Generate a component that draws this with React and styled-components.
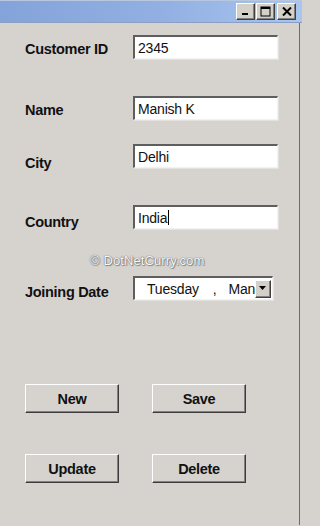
import React from "react";
import styled, { createGlobalStyle } from "styled-components";

const GlobalStyle = createGlobalStyle`
  html, body {
    margin: 0;
    padding: 0;
    background: #d6d3ce;
  }
  body {
    font-family: "Liberation Sans", Arial, sans-serif;
  }
`;

const Window = styled.div`
  position: relative;
  width: 302px;
  height: 526px;
  overflow: hidden;
  background: #d6d3ce;
`;

// Title bar with the three caption buttons
const TitleBar = styled.div`
  height: 23px;
  border-top: 1px solid #b8c6de;
  border-bottom: 1px solid #8c9fc2;
  background: linear-gradient(to right, #84a3da 0%, #92b0e2 55%, #a9c6ef 100%);
  display: flex;
  justify-content: flex-end;
  align-items: center;
  padding-right: 6px;
  box-sizing: border-box;
`;

const CaptionButton = styled.div`
  width: 19px;
  height: 17px;
  margin-left: ${(p) => p.$space || 1}px;
  box-sizing: border-box;
  background: #d4d0c8;
  border-top: 1px solid #ffffff;
  border-left: 1px solid #ffffff;
  border-right: 1px solid #404040;
  border-bottom: 1px solid #404040;
  box-shadow: inset -1px -1px 0 #808080;
  display: flex;
  align-items: center;
  justify-content: center;
`;

const Body = styled.div`
  position: relative;
  height: 502px;
  width: 300px;
  box-sizing: border-box;
  border-right: 1px solid #6c6c6c;
  padding: 12px 0 0 25px;
`;

const Row = styled.div`
  display: flex;
  align-items: flex-start;
  height: 24px;
  margin-top: ${(p) => p.$gap}px;
`;

const Label = styled.div`
  width: 108px;
  padding-top: ${(p) => p.$offset}px;
  font-size: 14.5px;
  font-weight: bold;
  letter-spacing: -0.3px;
  line-height: 17px;
  color: #111;
`;

const TextBox = styled.div`
  width: 145px;
  height: 24px;
  box-sizing: border-box;
  background: #ffffff;
  border-top: 2px solid #5e5e5e;
  border-left: 2px solid #5e5e5e;
  border-right: 1px solid #f2f2f2;
  border-bottom: 1px solid #f2f2f2;
  box-shadow: 1px 1px 0 #e4e2de;
  padding: 0 3px;
  display: flex;
  align-items: center;
  font-size: 14px;
  letter-spacing: -0.2px;
  color: #111;
`;

const Caret = styled.span`
  display: inline-block;
  width: 1px;
  height: 15px;
  margin-left: 1px;
  background: #000;
`;

const DateBox = styled(TextBox)`
  width: 140px;
  padding: 1px 1px 1px 12px;
  overflow: hidden;
  white-space: nowrap;
  justify-content: space-between;
`;

const DateText = styled.div`
  flex: 1;
  overflow: hidden;
  white-space: nowrap;
  display: flex;
  align-items: center;
`;

const DatePart = styled.span`
  margin-left: ${(p) => p.$space || 0}px;
`;

const DropButton = styled.div`
  flex: none;
  width: 16px;
  height: 18px;
  box-sizing: border-box;
  background: #d4d0c8;
  border-top: 1px solid #ffffff;
  border-left: 1px solid #ffffff;
  border-right: 1px solid #404040;
  border-bottom: 1px solid #404040;
  box-shadow: inset -1px -1px 0 #808080;
  display: flex;
  align-items: center;
  justify-content: center;
`;

const Watermark = styled.div`
  position: absolute;
  left: 90px;
  top: 230px;
  font-size: 13px;
  color: #f8f8f8;
  letter-spacing: 0.1px;
  text-shadow: 0 0 1px #6e6e6e, 0 0 1px #6e6e6e, 1px 1px 1px #8a8a8a;
`;

const ButtonRow = styled.div`
  display: flex;
  gap: 33px;
  margin-top: ${(p) => p.$gap}px;
`;

const Button = styled.button`
  width: 94px;
  height: 29px;
  box-sizing: border-box;
  background: #d6d3ce;
  border-top: 1px solid #ffffff;
  border-left: 1px solid #ffffff;
  border-right: 1px solid #3c3c3c;
  border-bottom: 1px solid #3c3c3c;
  box-shadow: inset -1px -1px 0 #808080;
  border-radius: 0;
  padding: 0;
  font-family: "Liberation Sans", Arial, sans-serif;
  font-size: 14.5px;
  font-weight: bold;
  letter-spacing: -0.3px;
  color: #111;
  cursor: pointer;
`;

function MinIcon() {
  return (
    <svg width="9" height="9" viewBox="0 0 9 9">
      <rect x="1" y="6" width="6" height="2" fill="#000" />
    </svg>
  );
}

function MaxIcon() {
  return (
    <svg width="11" height="11" viewBox="0 0 11 11">
      <rect x="1" y="1" width="9" height="9" fill="none" stroke="#000" strokeWidth="1" />
      <rect x="1" y="1" width="9" height="2" fill="#000" />
    </svg>
  );
}

function CloseIcon() {
  return (
    <svg width="10" height="9" viewBox="0 0 10 9">
      <path d="M1 0.5 L9 8.5 M9 0.5 L1 8.5" stroke="#000" strokeWidth="2" />
    </svg>
  );
}

function ArrowIcon() {
  return (
    <svg width="8" height="5" viewBox="0 0 8 5">
      <path d="M0 0 H7 L3.5 4 Z" fill="#000" />
    </svg>
  );
}

const fields = [
  { label: "Customer ID", value: "2345", gap: 0, offset: 6 },
  { label: "Name", value: "Manish K", gap: 37, offset: 6 },
  { label: "City", value: "Delhi", gap: 24, offset: 11 },
  { label: "Country", value: "India", gap: 37, offset: 9, caret: true },
];

export default function App() {
  return (
    <Window>
      <GlobalStyle />
      <TitleBar>
        <CaptionButton>
          <MinIcon />
        </CaptionButton>
        <CaptionButton>
          <MaxIcon />
        </CaptionButton>
        <CaptionButton $space={2}>
          <CloseIcon />
        </CaptionButton>
      </TitleBar>
      <Body>
        {fields.map((f) => (
          <Row key={f.label} $gap={f.gap}>
            <Label $offset={f.offset}>{f.label}</Label>
            <TextBox>
              {f.value}
              {f.caret && <Caret />}
            </TextBox>
          </Row>
        ))}

        <Watermark>© DotNetCurry.com</Watermark>

        <Row $gap={47}>
          <Label $offset={8}>Joining Date</Label>
          <DateBox>
            <DateText>
              <DatePart>Tuesday</DatePart>
              <DatePart $space={14}>,</DatePart>
              <DatePart $space={12}>Man</DatePart>
            </DateText>
            <DropButton>
              <ArrowIcon />
            </DropButton>
          </DateBox>
        </Row>

        <ButtonRow $gap={84}>
          <Button>New</Button>
          <Button>Save</Button>
        </ButtonRow>
        <ButtonRow $gap={41}>
          <Button>Update</Button>
          <Button>Delete</Button>
        </ButtonRow>
      </Body>
    </Window>
  );
}
